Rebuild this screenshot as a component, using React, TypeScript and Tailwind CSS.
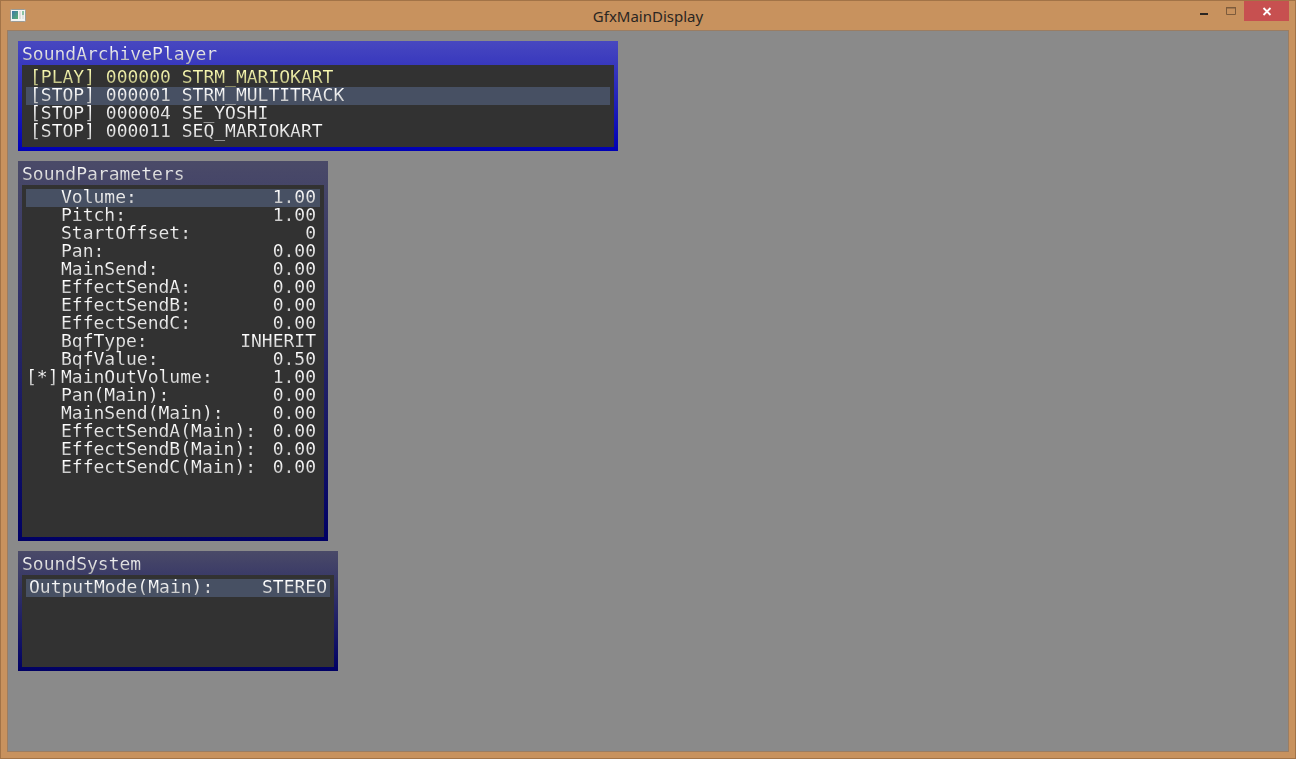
import clsx from "clsx";
import type { ReactNode } from "react";

const tracks = [
  { state: "PLAY", id: "000000", name: "STRM_MARIOKART" },
  { state: "STOP", id: "000001", name: "STRM_MULTITRACK" },
  { state: "STOP", id: "000004", name: "SE_YOSHI" },
  { state: "STOP", id: "000011", name: "SEQ_MARIOKART" },
];

const parameters = [
  { label: "Volume:", value: "1.00" },
  { label: "Pitch:", value: "1.00" },
  { label: "StartOffset:", value: "0" },
  { label: "Pan:", value: "0.00" },
  { label: "MainSend:", value: "0.00" },
  { label: "EffectSendA:", value: "0.00" },
  { label: "EffectSendB:", value: "0.00" },
  { label: "EffectSendC:", value: "0.00" },
  { label: "BqfType:", value: "INHERIT" },
  { label: "BqfValue:", value: "0.50" },
  { label: "MainOutVolume:", value: "1.00", marked: true },
  { label: "Pan(Main):", value: "0.00" },
  { label: "MainSend(Main):", value: "0.00" },
  { label: "EffectSendA(Main):", value: "0.00" },
  { label: "EffectSendB(Main):", value: "0.00" },
  { label: "EffectSendC(Main):", value: "0.00" },
];

const silver = "bg-linear-to-b/srgb from-white from-20% to-[#b0b0b0] bg-clip-text text-transparent leading-5";
const yellow = "bg-linear-to-b/srgb from-[#f8f8b0] from-20% to-[#a8a870] bg-clip-text text-transparent leading-5";

function Panel({ title, active, className, children }: {
  title: string;
  active?: boolean;
  className: string;
  children: ReactNode;
}) {
  return (
    <section
      className={clsx(
        "flex max-w-full flex-col bg-linear-to-b/srgb px-1 pb-1",
        active ? "from-[#4848c0] to-[#0000b4]" : "from-[#4a4a68] to-[#000064]",
        className,
      )}
    >
      <h2 className="flex h-6 items-center">
        <span className={clsx("pt-0.5", silver)}>{title}</span>
      </h2>
      <div className="grow bg-[#323232] p-1">{children}</div>
    </section>
  );
}

export default function App() {
  return (
    <div className="flex min-h-screen flex-col border border-[#a27347] bg-[#c8925e] px-1.5 pb-1.5">
      <header className="grid h-[29px] grid-cols-[1fr_auto_1fr] items-start">
        <svg className="mt-[7px] ml-0.5 h-[14px] w-[17px]" viewBox="0 0 17 14" aria-hidden="true">
          <defs>
            <linearGradient id="screen" x2="1" y2="1">
              <stop offset="0" stopColor="#3d77a8" />
              <stop offset="1" stopColor="#58b071" />
            </linearGradient>
          </defs>
          <rect x="1.5" y="1.5" width="15" height="12" rx="1" fill="#f4f4f2" stroke="#9a9c98" />
          <rect x="3" y="3" width="6" height="8" fill="url(#screen)" />
          <rect x="10" y="3" width="2" height="8" fill="#dededc" />
          <rect x="13" y="3" width="2" height="4" fill="#8cc4a4" />
          <rect x="13" y="7" width="2" height="4" fill="#e4e4e0" />
        </svg>
        <h1 className="pt-[3px] font-['Noto_Sans',sans-serif] text-[15px] leading-6 text-[#2b2622]">GfxMainDisplay</h1>
        <div className="flex justify-end">
          <button type="button" aria-label="Minimize" className="h-5 w-[27px]">
            <svg className="h-5 w-[27px]" viewBox="0 0 27 20" aria-hidden="true">
              <rect x="10" y="12" width="8" height="2" fill="#2b2622" />
            </svg>
          </button>
          <button type="button" aria-label="Maximize" className="h-5 w-[27px]">
            <svg className="h-5 w-[27px]" viewBox="0 0 27 20" aria-hidden="true">
              <path d="M9.5 7v6.5h9V7" fill="none" stroke="#7c5b3c" />
              <rect x="9" y="6" width="10" height="1.5" fill="#7c5b3c" />
            </svg>
          </button>
          <button type="button" aria-label="Close" className="h-5 w-[45px] bg-[#c75050]">
            <svg className="h-5 w-[45px]" viewBox="0 0 45 20" aria-hidden="true">
              <path d="M19.5 7l7 7m0-7l-7 7" stroke="#fff" strokeWidth="1.8" />
            </svg>
          </button>
        </div>
      </header>

      <main className="flex grow flex-col items-start gap-2.5 border border-[#9b7d62] bg-[#8a8a8a] p-2.5 font-['DejaVu_Sans_Mono',monospace] text-[18px] leading-[18px]">
        <Panel title="SoundArchivePlayer" active className="min-h-[110px] w-[600px]">
          <ul>
            {tracks.map((track, i) => (
              <li key={track.id}>
                <button
                  type="button"
                  className={clsx("flex h-[18px] w-full items-center px-1 text-left", i === 1 && "bg-[#475063]")}
                >
                  <span className={clsx("pb-0.5 whitespace-pre", track.state === "PLAY" ? yellow : silver)}>
                    {`[${track.state}] ${track.id} ${track.name}`}
                  </span>
                </button>
              </li>
            ))}
          </ul>
        </Panel>

        <Panel title="SoundParameters" className="min-h-[380px] w-[310px]">
          <dl>
            {parameters.map((item, i) => (
              <div key={item.label} className={clsx("flex h-[18px] items-center pr-1", i === 0 && "bg-[#475063]")}>
                <dt className="flex grow">
                  <span className={clsx("w-[35px] pb-0.5", silver)}>{item.marked && "[*]"}</span>
                  <span className={clsx("pb-0.5", silver)}>{item.label}</span>
                </dt>
                <dd className={clsx("pb-0.5", silver)}>{item.value}</dd>
              </div>
            ))}
          </dl>
        </Panel>

        <Panel title="SoundSystem" className="min-h-[120px] w-[320px]">
          <dl>
            <div className="flex h-[18px] items-center justify-between bg-[#475063] pr-[3px] pl-[3px]">
              <dt className={clsx("pb-0.5", silver)}>OutputMode(Main):</dt>
              <dd className={clsx("pb-0.5", silver)}>STEREO</dd>
            </div>
          </dl>
        </Panel>
      </main>
    </div>
  );
}
